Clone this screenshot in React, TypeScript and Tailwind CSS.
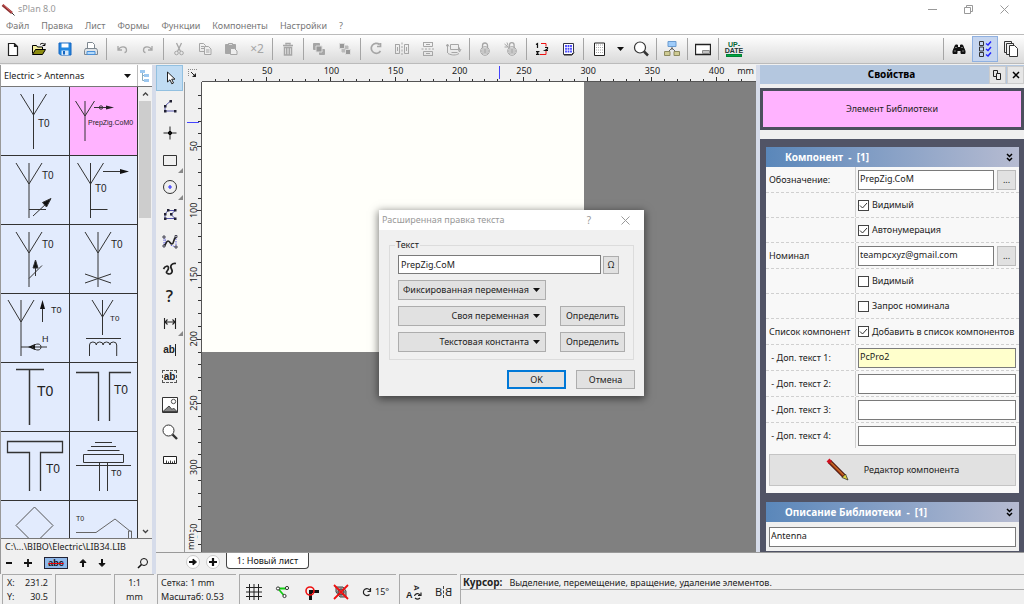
import { Fragment, useState } from "react";
import type { ReactNode } from "react";
import clsx from "clsx";

const Svg = ({ w = 16, h = 16, className, children }: { w?: number; h?: number; className?: string; children: ReactNode }) => (
  <svg width={w} height={h} viewBox={`0 0 ${w} ${h}`} fill="none" stroke="currentColor" className={clsx("shrink-0", className)} aria-hidden="true">
    {children}
  </svg>
);

const icons: Record<string, ReactNode> = {
  new: <Svg className="text-[#222]"><path d="M3.500 2.500h6l3 3v9h-9zM9.500 2.500v3h3" fill="#fff" strokeWidth="1.200" /></Svg>,
  open: (
    <Svg className="text-black">
      <path d="M1.500 12.500v-8h4l1 1.500h5v2" fill="#f5f0a0" />
      <path d="M1.500 13.500l3-5h10l-3 5z" fill="#8c8c10" />
      <path d="M9 3.500c1.500-1.500 3-1.500 4.500 0M14 2v2.500h-2.500" />
    </Svg>
  ),
  save: (
    <Svg className="text-[#1565c0]">
      <path d="M2 2h12v12H3.500L2 12.500z" fill="#2287e0" />
      <path d="M4.500 2.500h7v4h-7z" fill="#fff" stroke="none" />
      <path d="M4.500 9.500h7V14h-7z" fill="#d8e9f8" stroke="none" />
      <path d="M6 10h2v3.500H6z" fill="#1565c0" stroke="none" />
    </Svg>
  ),
  print: (
    <Svg className="text-[#7d8790]">
      <path d="M4.500 7V1.500h5l2 2V7" fill="#fff" />
      <path d="M2.500 7.500h11l1 2v4h-13v-4z" fill="#dfe3e6" />
      <path d="M4 10.500h8v3H4z" fill="#b5dafa" stroke="#4a90d9" />
    </Svg>
  ),
  undo: <Svg><path d="M4 5v4h4M4.500 8.500c2-3.500 8-3.500 8 .5 0 1.500-1 2.500-2 2.500" strokeWidth="1.300" /></Svg>,
  redo: <Svg><path d="M12 5v4H8M11.500 8.500c-2-3.500-8-3.500-8 .5 0 1.500 1 2.500 2 2.500" strokeWidth="1.300" /></Svg>,
  cut: <Svg><path d="M5.500 2l4 8.500M10.500 2l-4 8.500" strokeWidth="1.300" /><circle cx="5.500" cy="12" r="1.800" /><circle cx="10.500" cy="12" r="1.800" /></Svg>,
  copy: (
    <Svg>
      <path d="M2.500 2.500h4l2 2v6h-6zM4 5.500h3M4 7.500h3" />
      <path d="M7.500 5.500h4l2.500 2.500v5.500H7.500z" fill="#eee" />
      <path d="M9 9h3.500M9 11h3.500" />
    </Svg>
  ),
  paste: (
    <Svg>
      <path d="M2.500 3.500h10v9h-10z" fill="currentColor" />
      <path d="M5.500 2.500h4v2h-4z" fill="#ddd" />
      <path d="M7.500 7.500h4l2.500 2.500v3.500H7.500z" fill="#eee" />
    </Svg>
  ),
  double: <span className="text-[12px] leading-4">×2</span>,
  trash: (
    <Svg>
      <path d="M3 4.500h10M6 3.500V2.500h4v1M4.500 6.500h7v7.500h-7z" strokeWidth="1.500" />
      <path d="M6.500 7v7M8 7v7M9.500 7v7" />
    </Svg>
  ),
  front: <Svg><path d="M2.500 2.500h6v6h-6zM8.500 8.500h5v5h-5z" fill="currentColor" /><path d="M5 5h6v6H5z" fill="#999" stroke="#ddd" /></Svg>,
  back: <Svg><path d="M5 5h6v6H5z" fill="#bbb" stroke="#bbb" /><path d="M2.500 2.500h5v5h-5zM8.500 8.500h5v5h-5z" fill="#999" stroke="#ddd" /></Svg>,
  rotate: <Svg><path d="M12.500 10a5 5 0 1 1-1-6.500M12.500 2v3.500H9" strokeWidth="1.700" /></Svg>,
  mirrorH: <Svg><path d="M8 1.500v13" strokeDasharray="2 1.500" /><path d="M1.500 3v10M1.500 3.500h4v9h-4M3.500 6v4M14.500 3v10M14.500 3.500h-4v9h4M12.500 6v4" /></Svg>,
  mirrorV: <Svg><path d="M1.500 8h13" strokeDasharray="2 1.500" /><path d="M3 1.500h10M3.500 1.500v4h9v-4M3 14.500h10M3.500 14.500v-4h9v4M6 3.500h4M6 12.500h4" /></Svg>,
  align: <Svg><path d="M4.500 3.500h8v5h-8zM1.500 12V4M0 5.500L1.500 3 3 5.500M13.500 9.500v-3M12 8l1.500 3L15 8M2 12.500c4 2 8 2 11 0M5.500 11.500h6" /></Svg>,
  lock: <Svg><path d="M5.500 7V4.500a2.500 2.500 0 0 1 5 0V7" strokeWidth="1.300" /><circle cx="8" cy="10" r="4.300" /><path d="M4 10h8M5 8h6M5 12h6M8 8v4" /></Svg>,
  unlock: <Svg><path d="M6.500 6V4a2.300 2.300 0 0 1 4.600 0v3" strokeWidth="1.300" /><circle cx="9" cy="10" r="4.300" /><path d="M5 10h8M6 8h6M6 12h6M9 8v4M1.500 3l5 4M1.500 6h4M4 1.500l1 3" /></Svg>,
  renumber: (
    <Svg>
      <path d="M7 2.500h5v3M12 10v3.500H6" stroke="#e11" />
      <path d="M2 3.500l1.500-1v4.500M11 6.500h2.500v1.500L11 9.500h3M2 10.500h2.500L3 12l1.500 1.500H2" stroke="#111" strokeWidth="1.200" />
    </Svg>
  ),
  columns: (
    <Svg>
      <path d="M3.500 2.500h10v9l-2 2h-8z" fill="#fff" stroke="#334" />
      <path d="M6 4v8M8.500 4v8M11 4v8" stroke="#44f" strokeWidth="1.800" strokeDasharray="2 .8" />
      <path d="M4 14h8l2-2.500" stroke="#222" />
    </Svg>
  ),
  sheet: <Svg><path d="M3.500 2h10v12.500h-10z" fill="#fff" stroke="#222" /><path d="M5 4h7M5 6.500h7M5 9h7M5 11.500h7" stroke="#aaa" strokeDasharray="1 1" /></Svg>,
  zoom: <Svg><circle cx="7" cy="6.500" r="5.500" stroke="#333" fill="#fff" strokeWidth="1.200" /><path d="M11 10.500l4 4" stroke="#333" strokeWidth="2.500" /></Svg>,
  tree: (
    <Svg>
      <path d="M8 6v3M8 7l-4 4M8 7l4 4" stroke="#666" />
      <path d="M4 .500h8v5H4z" fill="#9fccfa" stroke="#6a9bd0" />
      <path d="M.5 10.500h5.500v4H.5zM10 10.500h5.500v4H10z" fill="#cfcb93" stroke="#8c8a60" />
    </Svg>
  ),
  frame: <Svg><path d="M.5 3.500h15v10H.5z" fill="#fff" stroke="#222" strokeWidth="1.300" /><path d="M7.500 9.500h7v3h-7zM8 11h6" stroke="#888" /></Svg>,
  update: (
    <span className="flex flex-col items-center font-[Liberation_Sans] text-[7px] font-bold leading-[6px] text-[#233]">
      <span className="text-[#063]">UP-</span>
      <span>DATE</span>
      <span className="h-[3px] w-4 border border-green-700 bg-green-600"></span>
    </span>
  ),
  find: (
    <Svg className="text-[#111]">
      <path d="M4.500 4h2v2.500h3V4h2l2.500 6v2.500h-4V9.500H6v3H2V10z" fill="currentColor" />
      <path d="M3.500 10h1M11.500 10h1M5 6v1M11 6v1" stroke="#ddd" />
    </Svg>
  ),
  checks: (
    <Svg>
      <path d="M2.500.500h4v4h-4zM2.500 6h4v4h-4zM2.500 11.500h4v4h-4z" stroke="#333" />
      <path d="M9 2.500l2 1.500 3-3.500M9 8l2 1.500L14 6M9 13.500l2 1.500 3-3.500" stroke="#22f" strokeWidth="1.400" />
    </Svg>
  ),
  pages: (
    <Svg className="text-[#333]">
      <path d="M1.500.500h7v11h-7z" fill="#eee" />
      <path d="M3.500 2.500h7v11h-7z" fill="#eee" />
      <path d="M6.500 4.500h5l3 3v8h-8z" fill="#fff" />
    </Svg>
  ),
};

const toolbar: { id: string; label: string; off?: boolean }[][] = [
  [{ id: "new", label: "Новый" }, { id: "open", label: "Открыть" }, { id: "save", label: "Сохранить" }, { id: "print", label: "Печать" }],
  [{ id: "undo", label: "Отменить", off: true }, { id: "redo", label: "Повторить", off: true }],
  [{ id: "cut", label: "Вырезать", off: true }, { id: "copy", label: "Копировать", off: true }, { id: "paste", label: "Вставить", off: true }, { id: "double", label: "Дублировать", off: true }],
  [{ id: "trash", label: "Удалить", off: true }],
  [{ id: "front", label: "Вперёд", off: true }, { id: "back", label: "Назад", off: true }],
  [{ id: "rotate", label: "Повернуть", off: true }, { id: "mirrorH", label: "Отразить по горизонтали", off: true }, { id: "mirrorV", label: "Отразить по вертикали", off: true }, { id: "align", label: "Выровнять", off: true }],
  [{ id: "lock", label: "Заблокировать", off: true }, { id: "unlock", label: "Разблокировать", off: true }],
  [{ id: "renumber", label: "Перенумеровать" }, { id: "columns", label: "Список" }],
  [{ id: "sheet", label: "Лист" }, { id: "zoom", label: "Масштаб" }],
  [{ id: "tree", label: "Дерево" }],
  [{ id: "frame", label: "Рамка" }],
  [{ id: "update", label: "Обновление" }],
];

const Sep = () => <span className="mx-[2px] h-[22px] w-px shrink-0 bg-[#a5a5a5]"></span>;

const ToolbarButton = ({ id, label, off, active }: { id: string; label: string; off?: boolean; active?: boolean }) => (
  <button
    aria-label={label}
    disabled={off}
    className={clsx(
      "flex h-[26px] w-[26px] shrink-0 items-center justify-center",
      off ? "text-[#a6a6a6]" : "text-[#333]",
      active && "border border-[#8fb0e0] bg-[#c5d5ef]"
    )}
  >
    {icons[id]}
  </button>
);

const Caret = () => (
  <svg width="7" height="4" viewBox="0 0 7 4" className="shrink-0" aria-hidden="true">
    <path d="M0 0h7L3.500 4z" fill="#111" />
  </svg>
);

/* ---------- drawing tools ---------- */

const N = "#223";
const toolGroups: { label: string; more?: boolean; icon: ReactNode }[][] = [
  [
    {
      label: "Выделение",
      icon: <Svg><path d="M5.500 2v10l2.500-2.200 1.800 4 1.700-.8-1.800-3.800h3.300z" fill="#fff" stroke="#222" /></Svg>,
    },
  ],
  [
    { label: "Линия", icon: <Svg><path d="M8.500 3L3 8v5h10" stroke="#55a" /><path d="M7.500 2h2.500v2.500H7.500zM2 7h2.500v2.500H2zM2 12h2.500v2.500H2zM12 12h2.500v2.500H12z" fill={N} stroke="none" /></Svg> },
    { label: "Узел", icon: <Svg><path d="M1.500 8h13M8 1.500v13" stroke="#222" /><circle cx="8" cy="8" r="1.600" fill="#111" /></Svg> },
    { label: "Прямоугольник", more: true, icon: <Svg><path d="M1.500 3.500h13v10h-13z" stroke="#333" /></Svg> },
    { label: "Окружность", more: true, icon: <Svg><circle cx="8" cy="8" r="6.500" stroke="#333" /><path d="M6 8h4M8 6v4" stroke="#33f" strokeWidth="1.200" /></Svg> },
    { label: "Полигон", icon: <Svg><path d="M6 4.500h7L9 8.500l4 4H3V8z" stroke="#55a" /><path d="M5 3h2.500v2.500H5zM12 3h2.500v2.500H12zM8 7h2.500v2.500H8zM12 11.500h2.500V14H12zM2 11.500h2.500V14H2zM2 7h2.500v2.500H2z" fill={N} stroke="none" /></Svg> },
    {
      label: "Кривая",
      icon: (
        <Svg>
          <path d="M2 4v10M2 4c2 3 2 4 0 9M14 3v11L8 12" stroke="#66d" strokeDasharray="1.500 1" />
          <path d="M2 13c2-1 2-5 4-5s2 3 4 3 1-5 4-7" stroke="#222" strokeWidth="1.600" />
          <path d="M1 3h2v2H1zM1 12h2v2H1zM13 2.500h2v2h-2zM13 13h2v2h-2z" fill="#eee" stroke={N} strokeWidth=".8" />
        </Svg>
      ),
    },
    { label: "Безье", icon: <Svg><path d="M1.500 9C3 6 6.500 5 6.500 8S2.500 12 5.500 13.500s6-1 4-4.500 .5-6 4.500-5.500" stroke="#222" strokeWidth="1.700" /></Svg> },
  ],
  [
    { label: "Справка", icon: <span className="font-[Open_Sans] text-[16px] font-semibold leading-4 text-[#222]">?</span> },
    { label: "Размер", more: true, icon: <Svg><path d="M2.500 3v11M13.500 3v11M3 7h10M5.500 4.500L3 7l2.500 2.500M10.500 4.500L13 7l-2.500 2.500" stroke="#222" strokeWidth="1.100" /></Svg> },
    { label: "Текст", icon: <span className="border-r border-[#222] font-[Liberation_Sans] text-[10px] font-bold leading-3 text-[#222]">ab</span> },
    { label: "Текстовый блок", icon: <span className="border border-dashed border-[#555] px-px font-[Liberation_Sans] text-[10px] font-bold leading-[11px] text-[#222]">ab</span> },
  ],
  [
    { label: "Картинка", icon: <Svg><path d="M.5.500h15v15H.5z" fill="#fff" stroke="#333" /><circle cx="11.500" cy="4.500" r="2.200" stroke="#555" /><path d="M1 14.500l6-5.500 3 3.500L11.500 11l3.500 3.500z" fill="#888" stroke="#444" /></Svg> },
    { label: "Лупа", icon: <Svg><circle cx="6.500" cy="6.500" r="5.500" stroke="#333" fill="#fff" /><path d="M10.500 10.500l4.500 4.500" stroke="#333" strokeWidth="2.400" /></Svg> },
  ],
  [{ label: "Линейка", icon: <Svg><path d="M1.500 4.500h13v7h-13z" fill="#fff" stroke="#222" /><path d="M4.500 11V8.500M6.500 11V9.500M8.500 11V8.500M10.500 11V9.500M12.500 11V8.500" stroke="#222" strokeWidth=".9" /></Svg> }],
];

const Tools = () => (
  <nav className="flex w-7 shrink-0 flex-col gap-px overflow-hidden bg-[#f0f0f0]">
    {toolGroups.map((group, g) => (
      <div key={g}>
        {group.map((tool) => (
          <button
            key={tool.label}
            aria-label={tool.label}
            className={clsx(
              "relative flex w-[27px] items-center justify-center",
              g === 0 ? "h-[26px] border border-[#92c0e0] bg-[#c0dcf3]" : "h-[27px]"
            )}
          >
            {tool.icon}
            {tool.more && (
              <svg width="5" height="5" className="absolute right-0 bottom-0" aria-hidden="true">
                <path d="M5 0v5H0z" fill="#888" />
              </svg>
            )}
          </button>
        ))}
      </div>
    ))}
  </nav>
);

/* ---------- library ---------- */

const T0 = ({ x, y, size = 10, children = "T0" }: { x: number; y: number; size?: number; children?: string }) => (
  <text x={x} y={y} fontSize={size} fontFamily="Liberation Sans, sans-serif" fill="#222" stroke="none">
    {children}
  </text>
);

// fork of an antenna: x is the mast, y1 where the arms meet, y2 the foot
const Fork = ({ x, arm = 13, top = 7, y1 = 28, y2 = 62 }: { x: number; arm?: number; top?: number; y1?: number; y2?: number }) => (
  <path d={`M${x - arm} ${top}L${x} ${y1}L${x + arm} ${top}M${x} ${top}V${y2}`} />
);

const symbols: ReactNode[] = [
  <><Fork x={32.5} /><T0 x={37} y={40} /></>,
  <>
    <Fork x={15} arm={9.5} top={14} y1={29} y2={54} />
    <path d="M24 20.500h14" /><circle cx="31" cy="20.500" r="1.700" /><path d="M36 18.500l8 2-8 2z" fill="#222" stroke="none" />
    <T0 x={18} y={38} size={7}>PrepZig.CoM0</T0>
  </>,
  <>
    <Fork x={28} /><T0 x={41} y={23} />
    <path d="M28 53.500h17M32 60l14-13" /><path d="M50 42.500l-8.500 4 4 4.500z" fill="#111" />
  </>,
  <>
    <Fork x={20.5} /><T0 x={25} y={36} />
    <path d="M20.500 53.500h17M33 15.500h20" /><path d="M50 13l9 2.500-9 2.500z" fill="#111" stroke="none" />
  </>,
  <>
    <Fork x={28} /><T0 x={41} y={23} />
    <path d="M34.500 51V42M28 53.500l13-13" /><path d="M32 43l2.500-8 2.500 8z" fill="#111" />
  </>,
  <><Fork x={28} /><T0 x={41} y={23} /><path d="M15 49l26 9M15 58l26-9" /></>,
  <>
    <Fork x={20} top={6} /><T0 x={50} y={19} size={9} /><T0 x={41} y={48} size={9}>H</T0>
    <path d="M41.500 28V14M20 53h26" /><path d="M39 15l2.500-9 2.500 9zM27 53l7-3v6z" fill="#111" stroke="none" />
    <path d="M31 53c2-2 4-3 6-3s3 1.500 3 3-1 3-3 3-4-1-6-3" />
  </>,
  <>
    <Fork x={32.5} arm={10.5} top={6} y1={23} y2={41} /><T0 x={40} y={27} size={8} />
    <path d="M16 44.500h35M19.500 62V51a3.400 3 0 0 1 6.800 0a3.400 3 0 0 1 6.800 0a3.400 3 0 0 1 6.800 0a3.400 3 0 0 1 6.800 0v11" />
  </>,
  <><path d="M15 6.500h28M28.500 6.500V62" strokeWidth="1.500" /><T0 x={36} y={33} size={14} /></>,
  <><path d="M6 9.500h22.500V58M61 9.500H39.500V58" strokeWidth="1.300" /><T0 x={44} y={31} size={12} /></>,
  <><path d="M28.500 59V20.500h-22V9.500h55v11h-22V59" strokeWidth="1.300" /><T0 x={45} y={41} size={12} /></>,
  <>
    <path d="M25 10.500h17M21 14.500h25M17.500 18.500h32M13.500 22.500h40v8h-40zM29.500 30v29M37.500 30v29M6 33.500h55" />
    <T0 x={41} y={44} size={9} />
  </>,
  <path d="M33.500 6L52 24.500 33.500 43 15 24.500z" stroke="#555" />,
  <><T0 x={6} y={20} size={7} /><path d="M6 31.500h20L45 18l15.500 12.500M58.500 30v9h3v-9zM6 38h20" stroke="#666" /></>,
];

const LibraryPanel = () => (
  <aside className="flex w-[152px] shrink-0 flex-col border-l border-[#999] bg-[#f0f0f0]">
    <div className="flex h-[21px] shrink-0 items-center bg-white">
      <div className="relative flex flex-1 items-center">
        <select aria-label="Библиотека" className="w-full appearance-none pl-[3px] text-[9px] leading-4 text-[#222] outline-none">
          <option>Electric &gt; Antennas</option>
        </select>
        <span className="pointer-events-none absolute right-[6px]"><Caret /></span>
      </div>
      <button aria-label="Дерево библиотек" className="flex h-full w-[15px] items-center justify-center border-l border-[#bbb]">
        <Svg w={10} h={12}>
          <path d="M2.500 3v7.500H5M2.500 5.500H5" stroke="#8ab" />
          <path d="M0 0h5v3H0zM4 4h5v3H4zM4 9h5v3H4z" fill="#9cc8f0" stroke="none" />
        </Svg>
      </button>
    </div>
    <div className="flex min-h-0 flex-1 border-y border-[#777]">
      <div className="grid flex-1 auto-rows-[69px] grid-cols-2 overflow-hidden bg-[#e2ebfd]">
        {symbols.map((symbol, i) => (
          <button key={i} aria-label={`Antenna ${i + 1}`} className={clsx("overflow-hidden border-r border-b border-[#333]", i === 1 && "bg-[#ffb3ff]")}>
            <svg width="68" height="68" viewBox="0 0 68 68" fill="none" stroke="#333" aria-hidden="true">
              {symbol}
            </svg>
          </button>
        ))}
      </div>
      <div className="flex w-[14px] flex-col items-center">
        <Svg w={13} h={14} className="text-[#444]"><path d="M4 8.500L6.500 6 9 8.500" strokeWidth="1.300" /></Svg>
        <span className="h-[117px] w-[12px] bg-[#cdcdcd]"></span>
        <Svg w={13} h={14} className="mt-auto text-[#444]"><path d="M4 6l2.500 2.500L9 6" strokeWidth="1.300" /></Svg>
      </div>
    </div>
    <p className="h-4 shrink-0 truncate pl-1 text-[9px] leading-[15px] text-[#222]">C:\...\BIBO\Electric\LIB34.LIB</p>
    <div className="flex h-[19px] shrink-0 items-start pt-[2px] pl-[2px] text-[#111]">
      <button aria-label="Удалить элемент" className="w-[13px]"><Svg w={12} h={12}><path d="M3 6h6" strokeWidth="2" /></Svg></button>
      <button aria-label="Добавить элемент" className="ml-[6px] w-[13px]"><Svg w={12} h={12}><path d="M2 6h8M6 2v8" strokeWidth="1.800" /></Svg></button>
      <button aria-label="Показать имена" className="ml-[9px] h-[12px] w-[24px] border border-[#223] bg-[#8fb8ea] font-[Liberation_Sans] text-[9px] font-bold leading-[9px] line-through decoration-red-600">
        abc
      </button>
      <button aria-label="Вверх" className="ml-[9px]"><Svg w={12} h={12}><path d="M6 10V4" strokeWidth="2" /><path d="M3 5.500L6 2.500l3 3z" fill="currentColor" /></Svg></button>
      <button aria-label="Вниз" className="ml-[7px]"><Svg w={12} h={12}><path d="M6 2v6" strokeWidth="2" /><path d="M3 6.500l3 3 3-3z" fill="currentColor" /></Svg></button>
      <button aria-label="Поиск" className="mr-[3px] ml-auto"><Svg w={12} h={12}><circle cx="7" cy="5" r="3.500" /><path d="M4.500 7.500L1 11" strokeWidth="1.600" /></Svg></button>
    </div>
  </aside>
);

/* ---------- sheet ---------- */

const PITCH = 12.84; // pixels in 10 mm
const marks = Array.from({ length: 60 }, (_, i) => i + 1);
const rulerFont = { fontFamily: "Noto Sans, sans-serif", fontSize: 9, fill: "#222" };

const Sheet = () => (
  <main className="grid min-w-0 flex-1 grid-cols-[18px_minmax(0,1fr)] grid-rows-[17px_minmax(0,1fr)] bg-[#f0f0f0]">
    <div className="flex items-center justify-center">
      <Svg w={12} h={12}><path d="M1 1.500h10M1.500 1v8" stroke="#888" strokeDasharray="1 1" /><path d="M4 4l4 4" stroke="#222" /><path d="M9 5v4H5z" fill="#222" stroke="none" /></Svg>
    </div>
    <div className="relative overflow-hidden border-b border-[#555]">
      <svg width="100%" height="17" className="block" aria-hidden="true">
        {marks.slice(0, 42).map((m) => (
          <Fragment key={m}>
            <path d={`M${Math.round(m * PITCH) + 0.5} ${m % 5 ? 14 : 12}V17`} stroke="#333" />
            {m % 5 === 0 && <text x={m * PITCH + 1} y="9" textAnchor="middle" {...rulerFont}>{m * 10}</text>}
          </Fragment>
        ))}
        <path d="M297.500 1v13" stroke="#44f" />
      </svg>
      <span className="absolute top-0 right-0 bg-[#f0f0f0] px-[2px] text-[9px] leading-3 text-[#222]">mm</span>
    </div>
    <div className="relative overflow-hidden border-r border-l border-r-[#555] border-l-[#999]">
      <svg width="16" height="100%" className="block" aria-hidden="true">
        {marks.map((m) => (
          <Fragment key={m}>
            <path d={`M${m % 5 ? 13 : 12} ${Math.round(m * PITCH) + 0.5}H16`} stroke="#333" />
            {m % 5 === 0 && (
              <text transform={`translate(12 ${m * PITCH}) rotate(-90)`} textAnchor="middle" {...rulerFont}>{m * 10}</text>
            )}
          </Fragment>
        ))}
        <path d="M2 40.500h12" stroke="#44f" />
      </svg>
      <span className="absolute bottom-0 left-0 h-[20px] w-3 rotate-180 bg-[#f0f0f0] pt-[2px] text-[9px] leading-3 text-[#222] [writing-mode:vertical-rl]">mm</span>
    </div>
    <div className="overflow-hidden bg-[#808080]">
      <div className="h-[270px] w-[382px] bg-[#fffffa]"></div>
    </div>
  </main>
);

/* ---------- properties ---------- */

const PanelHead = ({ children }: { children: ReactNode }) => (
  <h3 className="flex h-5 items-center justify-between bg-gradient-to-r from-[#5a87ba] to-[#b6bbd1] pr-[6px] pl-[19px] text-[10px] font-bold whitespace-pre text-white">
    {children}
    <Svg w={7} h={9} className="text-black"><path d="M1 1l2.500 2.500L6 1M1 5l2.500 2.500L6 5" strokeWidth="1.500" /></Svg>
  </h3>
);

const fieldClass = "h-5 w-full min-w-0 border border-[#7a7a7a] px-px pb-[3px] text-[9px] text-[#222] outline-none";

const Check = ({ label, on }: { label: string; on?: boolean }) => (
  <label className="flex items-center gap-[3px] whitespace-nowrap">
    <span className="grid shrink-0">
      <input type="checkbox" defaultChecked={on} className="peer col-start-1 row-start-1 h-[11px] w-[11px] appearance-none border border-[#444] bg-white" />
      <svg width="11" height="11" viewBox="0 0 11 11" fill="none" stroke="#333" className="pointer-events-none invisible col-start-1 row-start-1 peer-checked:visible" aria-hidden="true">
        <path d="M2 5.500l2.500 2.500L9 3" />
      </svg>
    </span>
    {label}
  </label>
);

type Row = { label?: string; value?: string; more?: boolean; check?: string; on?: boolean; mark?: boolean };

const rows: Row[] = [
  { label: "Обозначение:", value: "PrepZig.CoM", more: true },
  { check: "Видимый", on: true },
  { check: "Автонумерация", on: true },
  { label: "Номинал", value: "teampcxyz@gmail.com", more: true },
  { check: "Видимый" },
  { check: "Запрос номинала" },
  { label: "Список компонент", check: "Добавить в список компонентов", on: true },
  { label: " - Доп. текст 1:", value: "PcPro2", mark: true },
  { label: " - Доп. текст 2:", value: "" },
  { label: " - Доп. текст 3:", value: "" },
  { label: " - Доп. текст 4:", value: "" },
];

const PropertyRow = ({ row, id }: { row: Row; id: string }) => (
  <div className={clsx("flex border-b border-dashed border-[#d0d0d0] last:border-transparent", row.label ? "h-[26px]" : "h-[25px]")}>
    {row.check ? (
      <span className="flex w-[90px] shrink-0 items-center border-r border-[#d0d0d0] pl-[3px] whitespace-pre">{row.label}</span>
    ) : (
      <label htmlFor={id} className="flex w-[90px] shrink-0 items-center border-r border-[#d0d0d0] pl-[3px] whitespace-pre">{row.label}</label>
    )}
    <div className="flex min-w-0 flex-1 items-center gap-[3px] pr-[3px] pl-[2px]">
      {row.check ? (
        <Check label={row.check} on={row.on} />
      ) : (
        <input id={id} type="text" defaultValue={row.value} className={clsx(fieldClass, row.mark ? "bg-[#ffffcc]" : "bg-white")} />
      )}
      {row.more && <button aria-label="Подробнее" className="h-5 w-[19px] shrink-0 border border-[#bbb] bg-[#e1e1e1] leading-3">...</button>}
    </div>
  </div>
);

const PropertiesPanel = () => (
  <aside className="flex w-[264px] shrink-0 flex-col overflow-hidden bg-[#f0f0f0] text-[9px] text-[#222]">
    <div className="flex h-[19px] shrink-0 items-center bg-[#b4c7df]">
      <h2 className="flex-1 pl-[34px] text-center text-[10px] font-bold text-black">Свойства</h2>
      <button aria-label="Открепить" className="flex h-[18px] w-[17px] items-center justify-center border border-[#ccc] bg-[#e6e6e6] text-[#222]">
        <Svg w={9} h={10}><path d="M.5.500h4v6h-4z" /><path d="M3.500 3.500h4v6h-4z" fill="#eee" /></Svg>
      </button>
      <button aria-label="Закрыть" className="ml-px flex h-[18px] w-[17px] items-center justify-center border border-[#ccc] bg-[#e6e6e6] text-black">
        <Svg w={8} h={8}><path d="M1 1l6 6M7 1L1 7" strokeWidth="1.500" /></Svg>
      </button>
    </div>
    <div className="mt-1 flex h-[42px] shrink-0 items-center justify-center border-[3px] border-[#4c4f5e] bg-[#ffb3ff]">Элемент Библиотеки</div>
    <div className="mt-[9px] flex min-h-0 flex-1 flex-col gap-[9px] overflow-hidden bg-[#515466] px-[5px] pt-2 pl-[6px]">
      <section className="shrink-0 bg-[#f8f8f8]">
        <PanelHead>{"Компонент  -  [1]"}</PanelHead>
        <div>
          {rows.map((row, i) => <PropertyRow key={i} row={row} id={`prop-${i}`} />)}
        </div>
        <div className="px-[3px] pt-[5px] pb-[7px]">
          <button className="flex h-8 w-full items-center justify-center gap-[14px] border border-[#c4c4c4] bg-[#e1e1e1]">
            <Svg w={24} h={24}>
              <path d="M3.500 3.500l14.500 14.500" stroke="#3a1010" strokeWidth="4.400" />
              <path d="M4 4l13.500 13.500" stroke="#a03a12" strokeWidth="2.600" />
              <path d="M5 4.500l13 13" stroke="#d88a38" strokeWidth="1" />
              <path d="M2 2l2.500 2.500" stroke="#d01020" strokeWidth="4" />
              <path d="M19.500 16l2.500 6-6-2.500z" fill="#e0d040" stroke="#222" strokeWidth=".7" />
            </Svg>
            Редактор компонента
          </button>
        </div>
      </section>
      <section className="shrink-0 bg-[#f0f0f0]">
        <PanelHead>{"Описание Библиотеки  -  [1]"}</PanelHead>
        <div className="flex h-[29px] items-start px-[3px] pt-[5px]">
          <input aria-label="Описание Библиотеки" type="text" defaultValue="Antenna" className={clsx(fieldClass, "bg-white")} />
        </div>
      </section>
    </div>
  </aside>
);

/* ---------- status bar ---------- */

const statusIcons: { label: string; icon: ReactNode }[] = [
  { label: "Сетка", icon: <Svg><path d="M3.500 0v16M8 0v16M12.500 0v16M0 3.500h16M0 8h16M0 12.500h16" stroke="#222" /></Svg> },
  { label: "Резиновая линия", icon: <Svg><path d="M3 4.500h8M3 4.500l6 7" stroke="#1c1" strokeWidth="1.800" /><circle cx="3" cy="4.500" r="1.600" fill="#fff" stroke="#333" /><circle cx="12" cy="4" r="1.600" fill="#fff" stroke="#333" /><circle cx="9.500" cy="12" r="1.600" fill="#fff" stroke="#333" /></Svg> },
  { label: "Захват", icon: <Svg><path d="M6.500 16V7.500H15" stroke="#111" strokeWidth="3" /><circle cx="6" cy="7" r="4" stroke="#e11" strokeWidth="1.600" /></Svg> },
  { label: "Автосоединение", icon: <Svg><path d="M3 3h7l3 4v6H7L3 8z" fill="#aaa" stroke="#444" /><circle cx="8" cy="8" r="3" stroke="#333" /><path d="M1 1l14 14M15 1L1 15" stroke="#e11" strokeWidth="1.800" /></Svg> },
];

const cell = "shrink-0 border-t border-l border-[#aaa]";

const StatusBar = () => (
  <footer className="flex h-[30px] shrink-0 gap-[3px] overflow-hidden bg-[#f0f0f0] pl-[2px] text-[9px] leading-[14px] text-[#222]">
    <dl className={clsx(cell, "grid w-[50px] grid-cols-[auto_1fr] px-1 pt-px")}>
      <dt>X:</dt>
      <dd className="text-right">231.2</dd>
      <dt>Y:</dt>
      <dd className="text-right">30.5</dd>
    </dl>
    <div className={clsx(cell, "w-[56px]")}></div>
    <div className={clsx(cell, "w-[40px] pt-px text-center")}>
      <p>1:1</p>
      <p>mm</p>
    </div>
    <div className={clsx(cell, "w-[79px] pt-px pl-[3px] whitespace-nowrap")}>
      <p>Сетка: 1 mm</p>
      <p>Масштаб: 0.53</p>
    </div>
    <div className={clsx(cell, "flex w-[157px] items-center pt-1 pl-[6px]")}>
      {statusIcons.map((s) => (
        <button key={s.label} aria-label={s.label} className="mr-[13px] shrink-0">{s.icon}</button>
      ))}
      <button className="flex items-center gap-[3px]">
        <Svg w={10} h={10}><path d="M7.500 7.500A3.500 3.500 0 1 1 8 3.500M8.500 1v3.500H5.500" stroke="#222" strokeWidth="1.200" /></Svg>
        15°
      </button>
    </div>
    <div className={clsx(cell, "flex w-[58px] items-center gap-3 pt-1 pl-[6px]")}>
      <button aria-label="Повернуть текст">
        <Svg w={17} h={16}>
          <text x="0" y="14" fontSize="9" fontWeight="bold" fontFamily="Liberation Sans, sans-serif" fill="#222" stroke="none">A</text>
          <text transform="translate(8 1) rotate(90)" fontSize="8" fontWeight="bold" fontFamily="Liberation Sans, sans-serif" fill="#222" stroke="none">A</text>
          <path d="M8.500 12a3 3 0 0 1 5.500-1M15 8.500v3h-3M14 14a3.500 3 0 0 1-5 0" stroke="#222" strokeWidth="1.200" />
        </Svg>
      </button>
      <button aria-label="Отразить текст" className="flex items-center text-[11px]">
        B<span className="mx-px h-3 border-l border-dashed border-[#444]"></span>
        <span className="-scale-x-100">B</span>
      </button>
    </div>
    <div className="flex min-w-0 flex-1 flex-col border-t border-l border-[#aaa]">
      <p className="h-[15px] truncate border-b border-[#aaa] pl-[2px] leading-[14px] whitespace-pre">
        <b className="text-[10px]">Курсор:</b>
        {"   Выделение, перемещение, вращение, удаление элементов."}
      </p>
    </div>
  </footer>
);

/* ---------- dialog ---------- */

const dialogButton = "border border-[#adadad] bg-[#e1e1e1] text-[9px] text-[#222]";

const Dropdown = ({ children }: { children: string }) => (
  <button className={clsx(dialogButton, "flex h-5 w-[148px] items-center justify-end gap-[4px] pr-[5px] whitespace-nowrap")}>
    {children}
    <Caret />
  </button>
);

const TextDialog = () => {
  const [text, setText] = useState("PrepZig.CoM");
  return (
    <div role="dialog" aria-label="Расширенная правка текста" className="absolute top-[210px] left-[379px] w-[265px] bg-[#f0f0f0] text-[9px] text-[#222] shadow-[0_2px_8px_1px_rgba(0,0,0,0.5)]">
      <div className="flex h-5 items-center bg-white pl-[3px] text-[#999]">
        <span className="flex-1">Расширенная правка текста</span>
        <button aria-label="Помощь" className="w-6 text-[10px]">?</button>
        <button aria-label="Закрыть" className="ml-[10px] flex w-[33px] justify-start pl-[10px]">
          <Svg w={9} h={9}><path d="M.5.500l8 8M8.500.500l-8 8" /></Svg>
        </button>
      </div>
      <fieldset className="mx-[10px] mt-[8px] mb-[10px] border border-[#dcdcdc] px-2 pb-[7px]">
        <legend className="-ml-[3px] px-px leading-[14px]">Текст</legend>
        <div className="flex flex-col gap-[6px] pt-[3px]">
          <div className="flex items-center gap-[2px] pr-[6px]">
            <input aria-label="Текст" value={text} onChange={(e) => setText(e.target.value)} className="h-[19px] min-w-0 flex-1 border border-[#7a7a7a] bg-white px-[2px] outline-none" />
            <button aria-label="Вставить символ" className={clsx(dialogButton, "h-[18px] w-4")}>Ω</button>
          </div>
          <Dropdown>Фиксированная переменная</Dropdown>
          <div className="flex justify-between">
            <Dropdown>Своя переменная</Dropdown>
            <button className={clsx(dialogButton, "h-5 w-[65px]")}>Определить</button>
          </div>
          <div className="flex justify-between">
            <Dropdown>Текстовая константа</Dropdown>
            <button className={clsx(dialogButton, "h-5 w-[65px]")}>Определить</button>
          </div>
        </div>
      </fieldset>
      <div className="flex justify-end gap-[10px] pr-[9px] pb-[7px]">
        <button className="h-[19px] w-[59px] border-2 border-[#0078d7] bg-[#e1e1e1] leading-3">OK</button>
        <button className={clsx(dialogButton, "h-[19px] w-[59px]")}>Отмена</button>
      </div>
    </div>
  );
};

/* ---------- window ---------- */

const menu = ["Файл", "Правка", "Лист", "Формы", "Функции", "Компоненты", "Настройки", "?"];

const App = () => (
  <div className="relative flex h-screen flex-col overflow-hidden bg-[#f0f0f0] font-['Noto_Sans','Open_Sans',sans-serif]">
    <header className="shrink-0 bg-white">
      <div className="flex h-[18px] items-center pl-[1px] text-[9px] text-[#999]">
        <Svg w={14} h={14}>
          <path d="M1.500 3L11 11" stroke="#8c3030" strokeWidth="2.600" />
          <path d="M2 2.500l9 8" stroke="#d86060" strokeWidth="1" />
          <path d="M11 11l2.500 2.500" stroke="#333" />
        </Svg>
        <h1 className="ml-[3px] flex-1">sPlan 8.0</h1>
        <button aria-label="Свернуть" className="flex w-9 justify-center"><Svg w={9} h={9}><path d="M0 4.500h9" /></Svg></button>
        <button aria-label="Развернуть" className="flex w-9 justify-center"><Svg w={9} h={9}><path d="M.5 2.500h6v6h-6zM2.500 2.500v-2h6v6h-2" /></Svg></button>
        <button aria-label="Закрыть" className="mr-[2px] flex w-9 justify-center"><Svg w={9} h={9}><path d="M.5.500l8 8M8.500.500l-8 8" /></Svg></button>
      </div>
      <nav className="flex h-4 items-center gap-3 pl-[6px] text-[9px] text-[#777]">
        {menu.map((item) => <button key={item}>{item}</button>)}
      </nav>
    </header>
    <div className="flex h-[30px] shrink-0 items-center border-y border-[#bbb] bg-gradient-to-b from-white to-[#dadada]" role="toolbar">
      {toolbar.map((group, g) => (
        <Fragment key={g}>
          {g > 0 && <Sep />}
          {group.map((b) => (
            <Fragment key={b.id}>
              <ToolbarButton {...b} />
              {b.id === "sheet" && <button aria-label="Выбор листа" className="flex w-4 justify-center"><Caret /></button>}
            </Fragment>
          ))}
        </Fragment>
      ))}
      <div className="ml-auto flex items-center">
        <Sep />
        <ToolbarButton id="find" label="Найти" />
        <ToolbarButton id="checks" label="Свойства" active />
        <ToolbarButton id="pages" label="Листы" />
      </div>
    </div>
    <div className="flex min-h-0 flex-1 pt-px">
      <LibraryPanel />
      <span className="w-1 shrink-0 bg-[#d6dcea]"></span>
      <div className="flex min-w-0 flex-1 flex-col">
        <div className="flex min-h-0 flex-1">
          <Tools />
          <Sheet />
          <span className="w-1 shrink-0 bg-[#d6dcea]"></span>
          <PropertiesPanel />
        </div>
        <div className="flex h-[22px] shrink-0 items-start border-t border-[#999] pl-[30px] text-[#111]">
          <button aria-label="К листу" className="mt-[2px] flex h-[14px] w-[14px] items-center justify-center rounded-full border border-[#ccc] bg-white">
            <Svg w={10} h={10}><path d="M1 5h5" strokeWidth="2" /><path d="M5 2l3.500 3L5 8z" fill="currentColor" /></Svg>
          </button>
          <button aria-label="Добавить лист" className="mt-[2px] ml-[6px] flex h-[14px] w-[14px] items-center justify-center rounded-full border border-[#ccc] bg-white">
            <Svg w={10} h={10}><path d="M1 5h8M5 1v8" strokeWidth="2.200" /></Svg>
          </button>
          <button className="ml-[6px] h-4 w-[83px] rounded-b border border-t-0 border-[#444] bg-white text-[9px] leading-[14px]">1: Новый лист</button>
        </div>
      </div>
    </div>
    <StatusBar />
    <TextDialog />
  </div>
);

export default App;
